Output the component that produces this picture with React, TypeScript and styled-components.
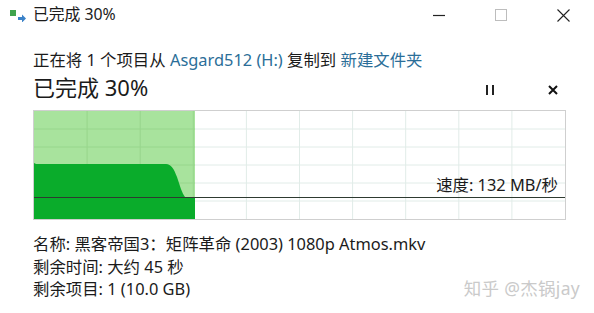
import React from "react";
import styled, { createGlobalStyle } from "styled-components";

const Global = createGlobalStyle`
  html, body { margin: 0; padding: 0; background: #fff; }
  body { font-family: "Noto Sans", "Noto Sans CJK SC", sans-serif; color: #1b1b1b; }
`;

const Window = styled.div`
  position: relative;
  width: 594px;
  height: 313px;
  overflow: hidden;
  background: #fff;
  display: flex;
  flex-direction: column;
`;

const TitleBar = styled.div`
  height: 30px;
  display: flex;
  align-items: center;
  padding-left: 9px;
`;

const TitleText = styled.span`
  font-size: 15.8px;
  margin-left: 6px;
  flex: 1;
  line-height: 1;
  margin-top: -1px;
`;

const Controls = styled.div`
  display: flex;
  align-items: center;
  height: 30px;
`;

const Ctl = styled.div`
  width: 62px;
  height: 30px;
  display: flex;
  align-items: center;
  justify-content: center;
`;

const Body = styled.div`
  padding: 19px 0 0 33px;
  display: flex;
  flex-direction: column;
`;

const Line = styled.div`
  font-size: 16.4px;
  line-height: 22px;
  white-space: nowrap;
`;

const InfoLine = styled(Line)`
  line-height: 22.5px;
`;

const Link = styled.span`
  color: #2b6e98;
`;

const HeadRow = styled.div`
  display: flex;
  align-items: center;
  height: 32px;
`;

const Big = styled.div`
  font-size: 22px;
  flex: 1;
  line-height: 32px;
`;

const HeadBtn = styled.div<{ $gap: number }>`
  width: 30px;
  height: 28px;
  display: flex;
  align-items: center;
  justify-content: center;
  margin-top: 5px;
  margin-left: ${(p) => p.$gap}px;
`;

const Chart = styled.div`
  position: relative;
  width: 533px;
  height: 110px;
  margin-top: 7px;
`;

const Speed = styled.div`
  position: absolute;
  right: 8px;
  top: 64px;
  font-size: 16.4px;
  line-height: 22px;
`;

const Info = styled.div`
  margin-top: 13px;
  display: flex;
  flex-direction: column;
`;

const Watermark = styled.div`
  position: absolute;
  right: 14px;
  bottom: 13px;
  font-size: 17.5px;
  color: #cacaca;
  letter-spacing: 0.3px;
`;

const W = 531;
const H = 108;

function Graph() {
  const cols = 10;
  const rows = 6;
  const cw = W / cols;
  const rh = H / rows;
  const split = 161;
  const vlines = Array.from({ length: cols - 1 }, (_, i) => (i + 1) * cw);
  const hlines = Array.from({ length: rows - 1 }, (_, i) => (i + 1) * rh);
  return (
    <svg width={533} height={110} viewBox="0 0 533 110" style={{ display: "block" }}>
      <rect x={0.5} y={0.5} width={532} height={109} fill="#fff" stroke="#cfcfcf" />
      <g transform="translate(1,1)">
        <rect x={0} y={0} width={split} height={H} fill="#a8e39d" />
        {vlines.map((x) => (
          <line key={"v" + x} x1={x} x2={x} y1={0} y2={H} stroke={x < split ? "#97d68c" : "#e1ece8"} strokeWidth={1} />
        ))}
        {hlines.map((y) => (
          <React.Fragment key={"h" + y}>
            <line x1={0} x2={split} y1={y} y2={y} stroke="#97d68c" strokeWidth={1} />
            <line x1={split} x2={W} y1={y} y2={y} stroke="#e1ece8" strokeWidth={1} />
          </React.Fragment>
        ))}
        <path
          d={`M0,52 L2,53 L132,53 C137,53 140,58 143,66 C146,75 148,82 151,86 L${split},86 L${split},${H} L0,${H} Z`}
          fill="#0aac2b"
        />
        <line x1={0} x2={W} y1={86.5} y2={86.5} stroke="#2e3a30" strokeWidth={1.2} />
      </g>
    </svg>
  );
}

export default function App() {
  return (
    <Window>
      <Global />
      <TitleBar>
        <svg width={18} height={14} viewBox="0 0 18 14">
          <rect x={1} y={2} width={6} height={6} fill="#3fa34d" />
          <path d="M9 9 h4 v-2.5 l4 4 -4 4 v-2.5 h-4 z" fill="#3b82c8" />
        </svg>
        <TitleText>已完成 30%</TitleText>
        <Controls>
          <Ctl>
            <svg width={12} height={12} viewBox="0 0 12 12">
              <line x1={0} x2={12} y1={6.5} y2={6.5} stroke="#222" strokeWidth={1.2} />
            </svg>
          </Ctl>
          <Ctl>
            <svg width={12} height={12} viewBox="0 0 12 12">
              <rect x={0.5} y={0.5} width={11} height={11} fill="none" stroke="#bdbdbd" />
            </svg>
          </Ctl>
          <Ctl>
            <svg width={13} height={13} viewBox="0 0 13 13">
              <path d="M0.5 0.5 L12.5 12.5 M12.5 0.5 L0.5 12.5" stroke="#222" strokeWidth={1.1} />
            </svg>
          </Ctl>
        </Controls>
      </TitleBar>
      <Body>
        <Line>
          正在将 1 个项目从 <Link>Asgard512 (H:)</Link> 复制到 <Link>新建文件夹</Link>
        </Line>
        <HeadRow>
          <Big>已完成 30%</Big>
          <HeadBtn $gap={0}>
            <svg width={8} height={10} viewBox="0 0 8 10">
              <rect x={0} y={0} width={2} height={10} fill="#222" />
              <rect x={6} y={0} width={2} height={10} fill="#222" />
            </svg>
          </HeadBtn>
          <HeadBtn $gap={33}>
            <svg width={10} height={10} viewBox="0 0 10 10">
              <path d="M1 1 L9 9 M9 1 L1 9" stroke="#111" strokeWidth={2} />
            </svg>
          </HeadBtn>
          <div style={{ width: 26 }} />
        </HeadRow>
        <Chart>
          <Graph />
          <Speed>速度: 132 MB/秒</Speed>
        </Chart>
        <Info>
          <InfoLine>名称: 黑客帝国3：矩阵革命 (2003) 1080p Atmos.mkv</InfoLine>
          <InfoLine>剩余时间: 大约 45 秒</InfoLine>
          <InfoLine>剩余项目: 1 (10.0 GB)</InfoLine>
        </Info>
      </Body>
      <Watermark>知乎 @杰锅jay</Watermark>
    </Window>
  );
}
